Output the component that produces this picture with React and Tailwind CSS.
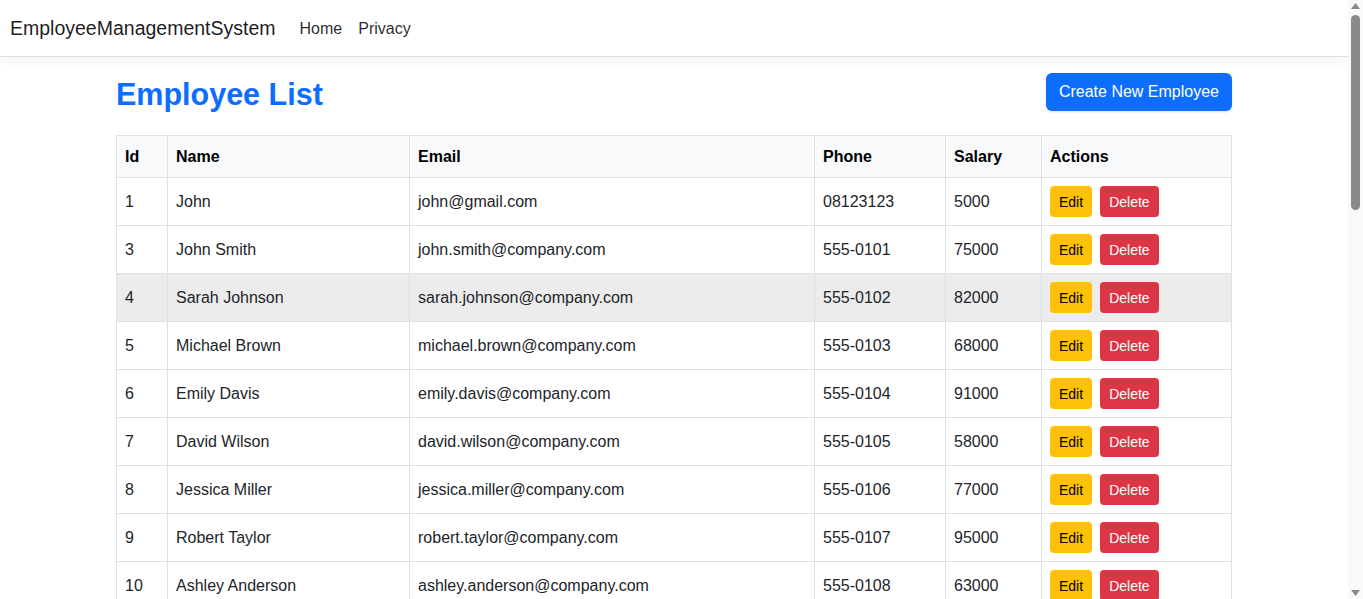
import React from 'react';

const employees = [
  { id: 1, name: 'John', email: 'john@gmail.com', phone: '08123123', salary: 5000 },
  { id: 3, name: 'John Smith', email: 'john.smith@company.com', phone: '555-0101', salary: 75000 },
  { id: 4, name: 'Sarah Johnson', email: 'sarah.johnson@company.com', phone: '555-0102', salary: 82000 },
  { id: 5, name: 'Michael Brown', email: 'michael.brown@company.com', phone: '555-0103', salary: 68000 },
  { id: 6, name: 'Emily Davis', email: 'emily.davis@company.com', phone: '555-0104', salary: 91000 },
  { id: 7, name: 'David Wilson', email: 'david.wilson@company.com', phone: '555-0105', salary: 58000 },
  { id: 8, name: 'Jessica Miller', email: 'jessica.miller@company.com', phone: '555-0106', salary: 77000 },
  { id: 9, name: 'Robert Taylor', email: 'robert.taylor@company.com', phone: '555-0107', salary: 95000 },
  { id: 10, name: 'Ashley Anderson', email: 'ashley.anderson@company.com', phone: '555-0108', salary: 63000 },
];

const Scrollbar = () => (
  <div className="w-[15px] shrink-0 bg-[#f9f9f9] flex flex-col items-center justify-between py-[3px]">
    <div className="flex flex-col items-center w-full">
      <svg width="9" height="6" viewBox="0 0 9 6">
        <path d="M4.5 0 L9 6 L0 6 Z" fill="#8a8a8a" />
      </svg>
      <div className="mt-[6px] w-[9px] h-[195px] rounded-full bg-[#8a8a8a]" />
    </div>
    <svg width="9" height="6" viewBox="0 0 9 6">
      <path d="M0 0 L9 0 L4.5 6 Z" fill="#8a8a8a" />
    </svg>
  </div>
);

const App = () => {
  return (
    <div className="h-screen flex overflow-hidden bg-white text-[#212529] font-['Liberation_Sans',Arial,sans-serif]">
      <div className="flex-1 min-w-0 overflow-hidden">
        {/* Navbar */}
        <header className="h-[57px] bg-white border-b border-[#dee2e6] shadow-[0_4px_12px_rgba(0,0,0,0.05)] flex items-center px-[10px]">
          <span className="text-[19.5px] text-[#000000e6] mr-4 pt-[2px]">EmployeeManagementSystem</span>
          <nav className="flex text-base text-[#000000d9] pt-[2px]">
            <a className="px-2 py-2">Home</a>
            <a className="px-2 py-2">Privacy</a>
          </nav>
        </header>

        <main className="max-w-[1140px] mx-auto px-3 pt-4 pb-12">
          {/* Header */}
          <div className="flex justify-between items-center h-[38px] mb-6">
            <h1 className="text-[30.5px] font-bold text-[#0d6efd] leading-none pt-[4px]">Employee List</h1>
            <button className="bg-[#0d6efd] text-white text-base px-[13px] h-[38px] rounded-md leading-6 shadow-sm">
              Create New Employee
            </button>
          </div>

          {/* Table */}
          <table className="w-full table-fixed border-collapse border border-[#dee2e6] text-base">
            <colgroup>
              <col className="w-[51px]" />
              <col className="w-[242px]" />
              <col className="w-[405px]" />
              <col className="w-[131px]" />
              <col className="w-[96px]" />
              <col />
            </colgroup>
            <thead>
              <tr className="bg-[#f8f9fa] text-left text-black">
                <th className="border border-[#dee2e6] px-2 py-2 h-[42px] font-bold">Id</th>
                <th className="border border-[#dee2e6] px-2 py-2 font-bold">Name</th>
                <th className="border border-[#dee2e6] px-2 py-2 font-bold">Email</th>
                <th className="border border-[#dee2e6] px-2 py-2 font-bold">Phone</th>
                <th className="border border-[#dee2e6] px-2 py-2 font-bold">Salary</th>
                <th className="border border-[#dee2e6] px-2 py-2 font-bold">Actions</th>
              </tr>
            </thead>
            <tbody>
              {employees.map((emp) => (
                <tr key={emp.id} className={emp.id === 4 ? 'bg-[#ececec]' : 'bg-white'}>
                  <td className="border border-[#dee2e6] px-2 h-12">{emp.id}</td>
                  <td className="border border-[#dee2e6] px-2">{emp.name}</td>
                  <td className="border border-[#dee2e6] px-2">{emp.email}</td>
                  <td className="border border-[#dee2e6] px-2">{emp.phone}</td>
                  <td className="border border-[#dee2e6] px-2">{emp.salary}</td>
                  <td className="border border-[#dee2e6] px-2">
                    <div className="flex gap-2">
                      <button className="bg-[#ffc107] text-black text-sm px-[9px] h-[31px] rounded">Edit</button>
                      <button className="bg-[#dc3545] text-white text-sm px-[9px] h-[31px] rounded">Delete</button>
                    </div>
                  </td>
                </tr>
              ))}
            </tbody>
          </table>
        </main>
      </div>
      <Scrollbar />
    </div>
  );
};

export default App;
